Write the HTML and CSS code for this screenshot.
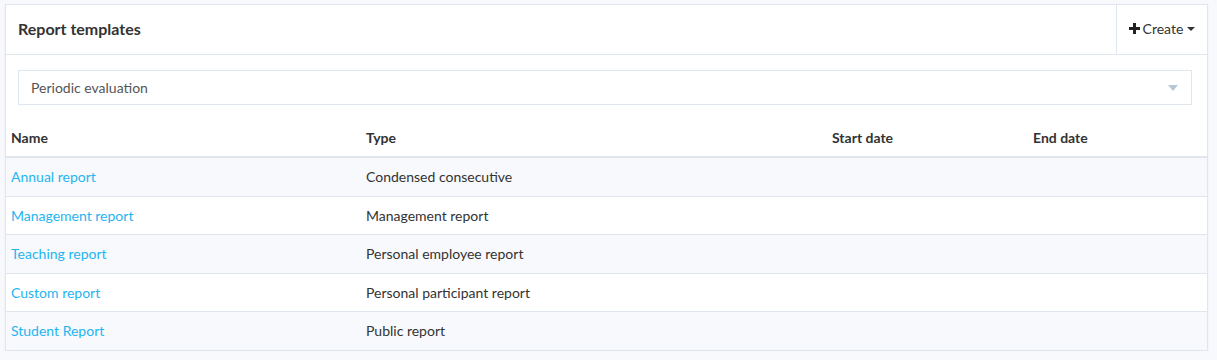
FILE: index.html
```html
<!DOCTYPE html>
<html lang="en">
<head>
    <meta charset="UTF-8">
    <title>Report templates</title>
    <link rel="stylesheet" href="styles.css">
</head>
<body>

<div class="panel">
    <div class="panel-heading">
        <h3 class="panel-title">Report templates</h3>
        <div class="panel-actions">
            <button class="create-btn">
                <svg class="plus" width="11" height="11" viewBox="0 0 11 11"><path d="M4 0h3v4h4v3H7v4H4V7H0V4h4z" fill="#222"/></svg>
                Create
                <span class="caret"></span>
            </button>
        </div>
    </div>

    <div class="panel-filter">
        <div class="select">
            <span>Periodic evaluation</span>
            <span class="select-arrow"></span>
        </div>
    </div>

    <table class="table">
        <colgroup>
            <col class="col-name">
            <col class="col-type">
            <col class="col-start">
            <col>
        </colgroup>
        <thead>
            <tr>
                <th>Name</th>
                <th>Type</th>
                <th>Start date</th>
                <th>End date</th>
            </tr>
        </thead>
        <tbody>
            <tr><td><a href="#">Annual report</a></td><td>Condensed consecutive</td><td></td><td></td></tr>
            <tr><td><a href="#">Management report</a></td><td>Management report</td><td></td><td></td></tr>
            <tr><td><a href="#">Teaching report</a></td><td>Personal employee report</td><td></td><td></td></tr>
            <tr><td><a href="#">Custom report</a></td><td>Personal participant report</td><td></td><td></td></tr>
            <tr><td><a href="#">Student Report</a></td><td>Public report</td><td></td><td></td></tr>
        </tbody>
    </table>
</div>

</body>
</html>
```

FILE: styles.css
```css
body {
    font-family: Lato, "Open Sans", sans-serif;
    font-size: 14px;
    color: #333;
    background-color: #f7f9fc;
    margin: 0;
    padding: 4px 9px 0 5px;
}
.panel {
    background-color: #fff;
    border: 1px solid #dfe6ee;
    box-shadow: 0 1px 2px rgba(0, 0, 0, 0.06);
}
.panel-heading {
    display: flex;
    align-items: stretch;
    height: 49px;
    border-bottom: 1px solid #dfe6ee;
}
.panel-title {
    flex: 1;
    margin: 0;
    padding: 0 0 3px 12px;
    display: flex;
    align-items: center;
    font-size: 16px;
    font-weight: 700;
    color: #333;
}
.panel-actions {
    width: 90px;
    border-left: 1px solid #dfe6ee;
    display: flex;
    align-items: center;
    justify-content: center;
    padding-bottom: 2px;
}
.create-btn {
    display: flex;
    align-items: center;
    gap: 3px;
    background: none;
    border: none;
    padding: 0;
    font-family: inherit;
    font-size: 14px;
    color: #333;
    cursor: pointer;
}
.caret {
    display: inline-block;
    margin-left: 1px;
    border-top: 4px solid #333;
    border-left: 4px solid transparent;
    border-right: 4px solid transparent;
}
.panel-filter {
    padding: 15px 15px 0 12px;
}
.select {
    height: 33px;
    border: 1px solid #dfe6ee;
    display: flex;
    align-items: center;
    justify-content: space-between;
    padding: 0 13px 0 12px;
    color: #555;
}
.select-arrow {
    border-top: 6px solid #b8c6d6;
    border-left: 5px solid transparent;
    border-right: 5px solid transparent;
}
.table {
    width: 100%;
    border-collapse: collapse;
    margin-top: 14px;
}
.col-name {
    width: 355px;
}
.col-type {
    width: 466px;
}
.col-start {
    width: 201px;
}
.table th {
    text-align: left;
    font-weight: 700;
    padding: 10px 5px 10px;
    border-bottom: 2px solid #dfe6ee;
}
.table td {
    padding: 0 5px;
    height: 37.5px;
    border-top: 1px solid #dfe6ee;
}
.table thead + tbody tr:first-child td {
    border-top: none;
}
.table tbody tr:nth-child(odd) {
    background-color: #f7f9fc;
}
.table a {
    color: #1fb5f0;
    text-decoration: none;
}
```
